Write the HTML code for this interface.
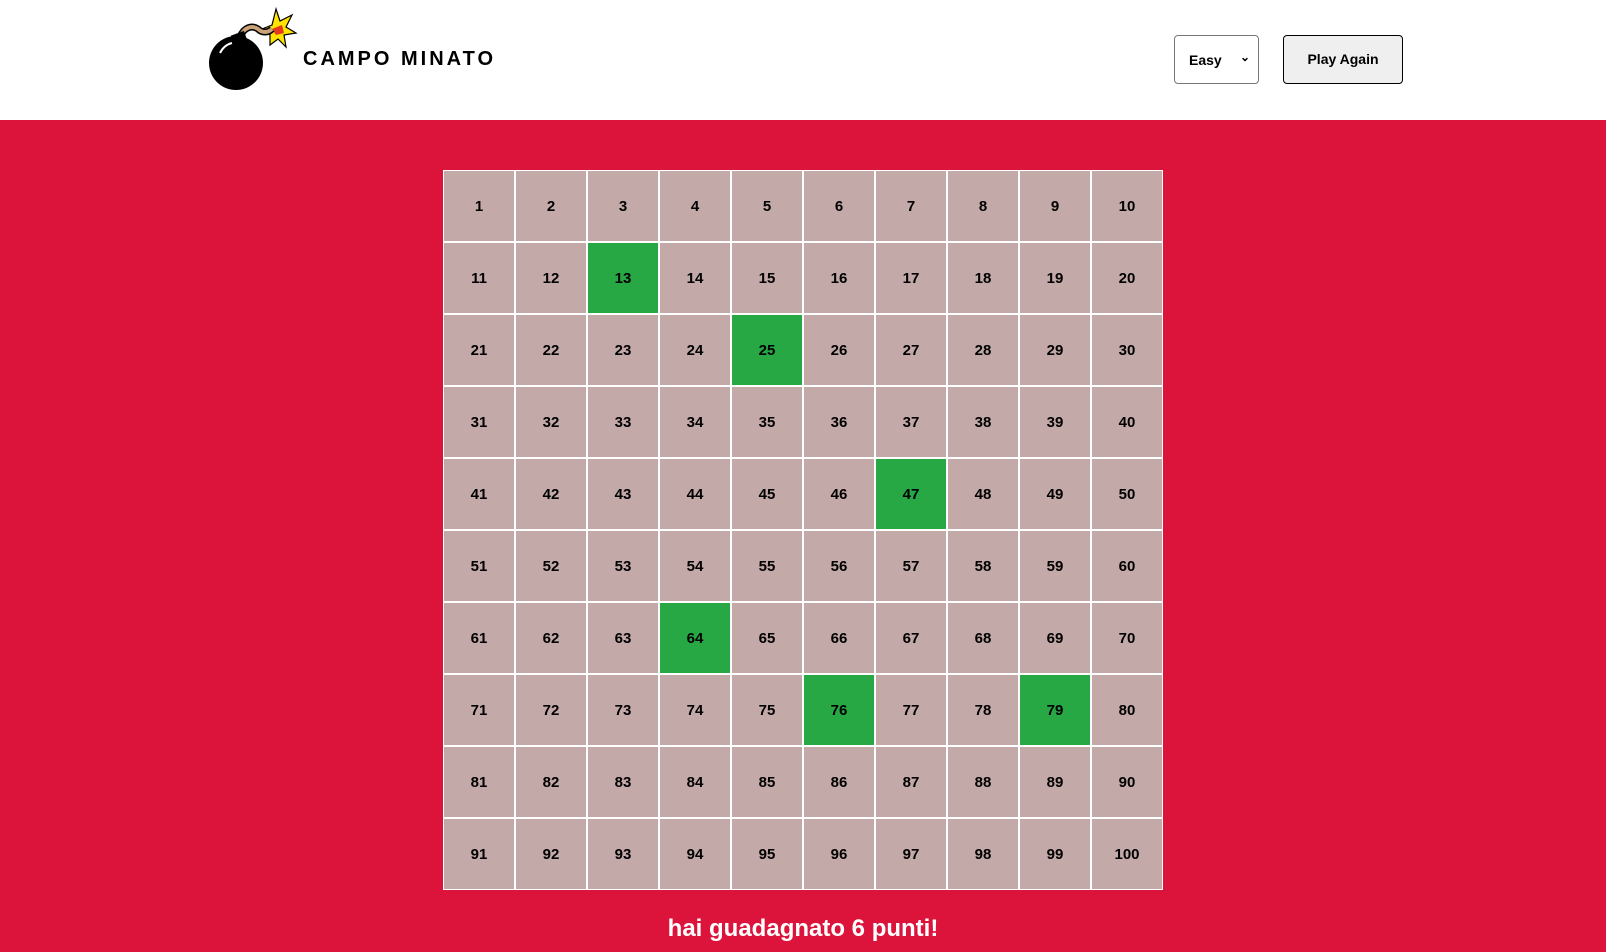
<!DOCTYPE html>
<html><head><style>
*{margin:0;padding:0;box-sizing:border-box}
body{width:1606px;height:952px;overflow:hidden;font-family:"Liberation Sans",sans-serif;background:#dc143c}
header{height:120px;background:#fff;position:relative}
.title{position:absolute;left:303px;top:48px;font-size:20px;font-weight:bold;letter-spacing:3px}
.sel{position:absolute;left:1174px;top:35px;width:85px;height:49px;border:1px solid #777;border-radius:4px;background:#fff;font-size:14px;font-weight:bold;padding:16px 0 0 14px}
.sel span{position:absolute;right:8px;top:14px;font-size:12px}
.btn{position:absolute;left:1283px;top:35px;width:120px;height:49px;border:1px solid #000;border-radius:4px;background:#efefef;font-size:14px;font-weight:bold;text-align:center;line-height:47px}
.grid{position:absolute;left:443px;top:170px;width:720px;display:flex;flex-wrap:wrap}
.c{width:72px;height:72px;border:1px solid #fff;background:#c4a9a9;display:flex;align-items:center;justify-content:center;font-weight:bold;font-size:15px}
.g{background:#28a745}
.msg{position:absolute;left:0;width:1606px;top:915px;text-align:center;color:#fff;font-weight:bold;font-size:24px}
</style></head><body>
<header>
<svg style="position:absolute;left:200px;top:5px" width="100" height="90" viewBox="0 0 100 90">
<polygon points="76,4 80,16 92,10 86,22 96,28 84,30 86,42 78,34 70,40 70,30 62,24 72,20" fill="#ffe400" stroke="#000" stroke-width="1.2"/>
<polygon points="72,24 82,20 84,28 76,30" fill="#e53a1c"/>
<path d="M40,32 C44,22 52,20 58,24 C62,28 68,28 72,24" stroke="#000" stroke-width="7" fill="none"/>
<path d="M40,32 C44,22 52,20 58,24 C62,28 68,28 72,24" stroke="#c9a27a" stroke-width="4" fill="none"/>
<rect x="32" y="28" width="14" height="10" fill="#000" transform="rotate(-20 39 33)"/>
<circle cx="36" cy="58" r="27" fill="#000"/>
<path d="M20,48 Q24,40 32,38" stroke="#fff" stroke-width="2" fill="none"/>
</svg>
<div class="title">CAMPO MINATO</div>
<div class="sel">Easy<span>&#8964;</span></div>
<div class="btn">Play Again</div>
</header>
<div class="grid">
<div class="c">1</div><div class="c">2</div><div class="c">3</div><div class="c">4</div><div class="c">5</div><div class="c">6</div><div class="c">7</div><div class="c">8</div><div class="c">9</div><div class="c">10</div>
<div class="c">11</div><div class="c">12</div><div class="c g">13</div><div class="c">14</div><div class="c">15</div><div class="c">16</div><div class="c">17</div><div class="c">18</div><div class="c">19</div><div class="c">20</div>
<div class="c">21</div><div class="c">22</div><div class="c">23</div><div class="c">24</div><div class="c g">25</div><div class="c">26</div><div class="c">27</div><div class="c">28</div><div class="c">29</div><div class="c">30</div>
<div class="c">31</div><div class="c">32</div><div class="c">33</div><div class="c">34</div><div class="c">35</div><div class="c">36</div><div class="c">37</div><div class="c">38</div><div class="c">39</div><div class="c">40</div>
<div class="c">41</div><div class="c">42</div><div class="c">43</div><div class="c">44</div><div class="c">45</div><div class="c">46</div><div class="c g">47</div><div class="c">48</div><div class="c">49</div><div class="c">50</div>
<div class="c">51</div><div class="c">52</div><div class="c">53</div><div class="c">54</div><div class="c">55</div><div class="c">56</div><div class="c">57</div><div class="c">58</div><div class="c">59</div><div class="c">60</div>
<div class="c">61</div><div class="c">62</div><div class="c">63</div><div class="c g">64</div><div class="c">65</div><div class="c">66</div><div class="c">67</div><div class="c">68</div><div class="c">69</div><div class="c">70</div>
<div class="c">71</div><div class="c">72</div><div class="c">73</div><div class="c">74</div><div class="c">75</div><div class="c g">76</div><div class="c">77</div><div class="c">78</div><div class="c g">79</div><div class="c">80</div>
<div class="c">81</div><div class="c">82</div><div class="c">83</div><div class="c">84</div><div class="c">85</div><div class="c">86</div><div class="c">87</div><div class="c">88</div><div class="c">89</div><div class="c">90</div>
<div class="c">91</div><div class="c">92</div><div class="c">93</div><div class="c">94</div><div class="c">95</div><div class="c">96</div><div class="c">97</div><div class="c">98</div><div class="c">99</div><div class="c">100</div>
</div>
<div class="msg">hai guadagnato 6 punti!</div>
</body></html>
